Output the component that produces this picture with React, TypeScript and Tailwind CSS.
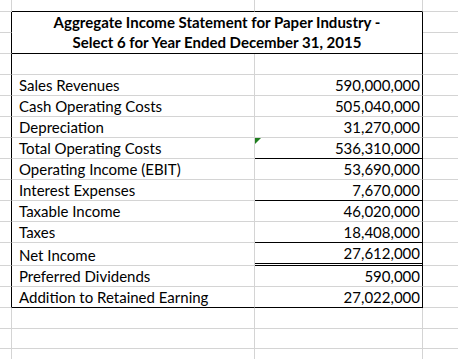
import React from "react";

type B = "gray" | "black" | "double" | "none";

const rightCls: Record<B, string> = {
  gray: "border-r border-r-[#d4d4d4]",
  black: "border-r border-r-black",
  double: "border-r border-r-black",
  none: "",
};
const bottomCls: Record<B, string> = {
  gray: "border-b border-b-[#d4d4d4]",
  black: "border-b border-b-black",
  double: "border-b-[3px] border-double border-b-black",
  none: "",
};

function Cell({
  r = "gray",
  b = "gray",
  className = "",
  children,
}: {
  r?: B;
  b?: B;
  className?: string;
  children?: React.ReactNode;
}) {
  return (
    <div className={`relative min-w-0 overflow-visible ${rightCls[r]} ${bottomCls[b]} ${className}`}>
      {children}
    </div>
  );
}

const rows: { label: string; value: string; b: B; tri?: boolean }[] = [
  { label: "Sales Revenues", value: "590,000,000", b: "gray" },
  { label: "Cash Operating Costs", value: "505,040,000", b: "gray" },
  { label: "Depreciation", value: "31,270,000", b: "gray" },
  { label: "Total Operating Costs", value: "536,310,000", b: "black", tri: true },
  { label: "Operating Income (EBIT)", value: "53,690,000", b: "gray" },
  { label: "Interest Expenses", value: "7,670,000", b: "black" },
  { label: "Taxable Income", value: "46,020,000", b: "gray" },
  { label: "Taxes", value: "18,408,000", b: "black" },
  { label: "Net Income", value: "27,612,000", b: "double" },
  { label: "Preferred Dividends", value: "590,000", b: "gray" },
  { label: "Addition to Retained Earning", value: "27,022,000", b: "black" },
];

export default function App() {
  const txt = "flex items-end pb-[1px] leading-[18px] text-[15px] text-black whitespace-nowrap";
  return (
    <div
      className="w-[458px] h-[359px] overflow-hidden bg-white"
      style={{ fontFamily: "Lato, 'Liberation Sans', sans-serif" }}
    >
      <div className="grid grid-cols-[12px_243px_168px_1fr] grid-rows-[12px_21px_21px_21px_21px_21px_21px_21px_21px_21px_21px_21px_23px_21px_21px_21px_20px_20px]">
        {/* row 0 */}
        <Cell />
        <Cell b="black" />
        <Cell b="black" />
        <Cell r="none" />

        {/* title rows */}
        <Cell r="black" />
        <Cell r="black" b="black" className="col-span-2 row-span-2 flex flex-col items-center justify-end pb-[1px]">
          <div className="text-[15px] font-bold leading-[20px] text-black whitespace-nowrap">
            Aggregate Income Statement for Paper Industry -
          </div>
          <div className="text-[15px] font-bold leading-[20px] text-black whitespace-nowrap">
            Select 6 for Year Ended December 31, 2015
          </div>
        </Cell>
        <Cell r="none" />
        <Cell r="black" />
        <Cell r="none" />

        {/* empty row */}
        <Cell r="black" />
        <Cell />
        <Cell r="black" />
        <Cell r="none" />

        {rows.map((row, i) => {
          const last = i === rows.length - 1;
          return (
            <React.Fragment key={row.label}>
              <Cell r="black" />
              <Cell b={last ? "black" : "gray"} className={`${txt} pl-[7px]`}>
                {row.label}
              </Cell>
              <Cell r="black" b={row.b} className={`${txt} justify-end pr-[2px]`}>
                {row.tri && (
                  <svg className="absolute left-0 top-0" width="6" height="6" viewBox="0 0 6 6">
                    <polygon points="0,0 6,0 0,6" fill="#1e7e1e" />
                  </svg>
                )}
                {row.value}
              </Cell>
              <Cell r="none" />
            </React.Fragment>
          );
        })}

        {[0, 1, 2].map((k) => (
          <React.Fragment key={k}>
            <Cell />
            <Cell />
            <Cell />
            <Cell r="none" />
          </React.Fragment>
        ))}
      </div>
    </div>
  );
}
